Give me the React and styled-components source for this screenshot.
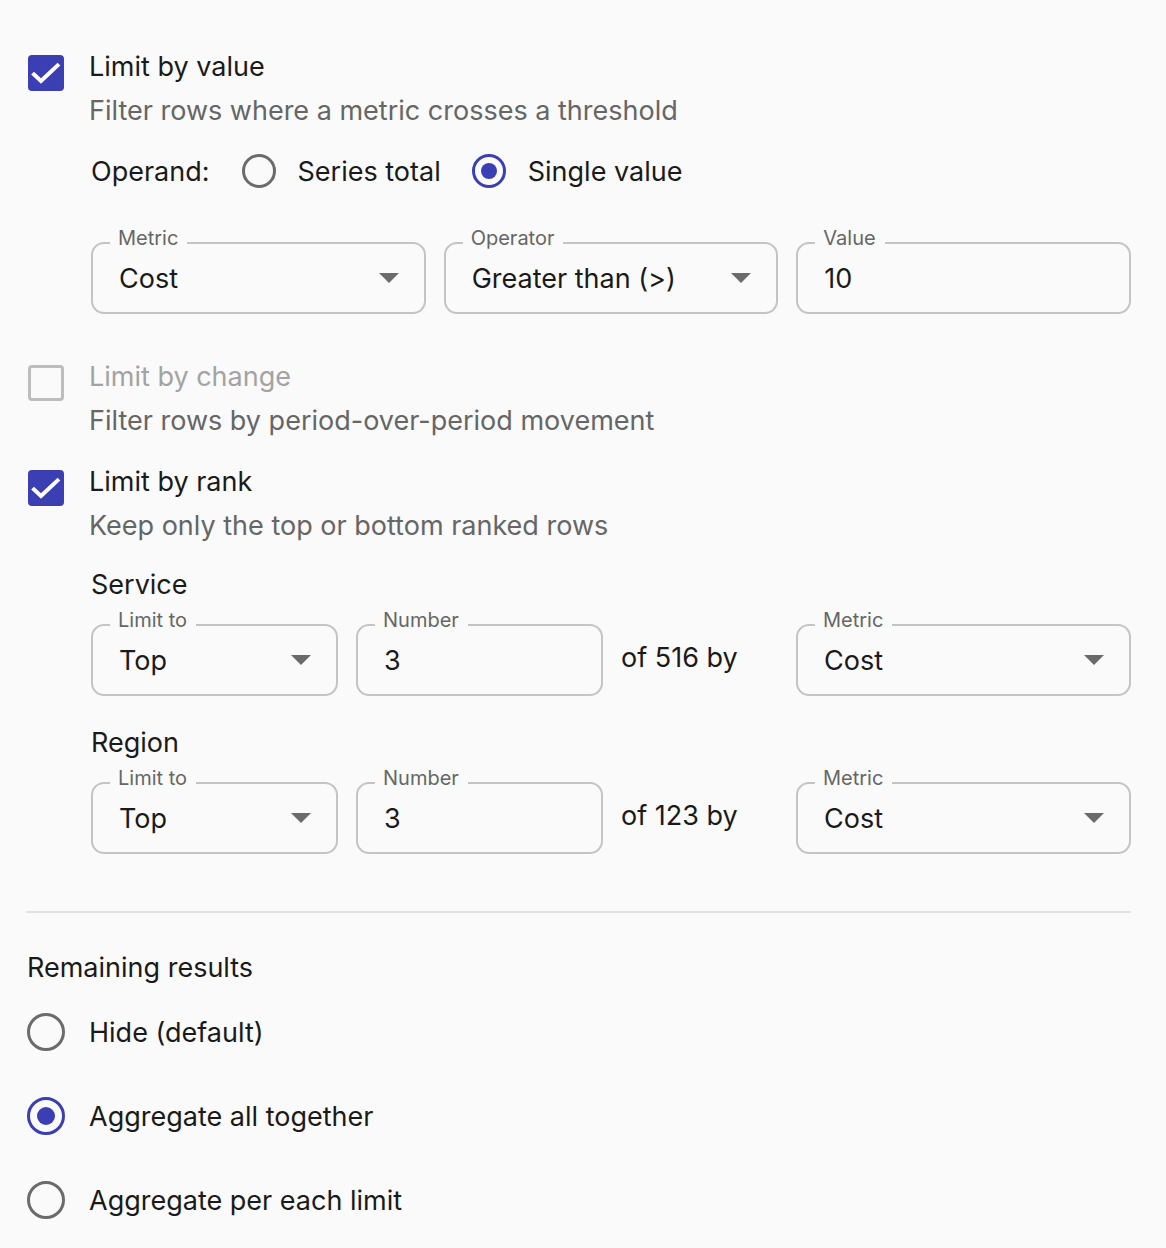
import styled, { createGlobalStyle } from "styled-components";

const GlobalStyle = createGlobalStyle`
  html, body {
    margin: 0;
    background: #fafafa;
  }
  body {
    font-family: Inter, "Noto Sans", Roboto, sans-serif;
    color: #212121;
    -webkit-font-smoothing: antialiased;
  }
`;

const ACCENT = "#3c3eb4";
const TEXT = 27;

const Page = styled.div`
  padding: 45px 35px 40px 26px;
  box-sizing: border-box;
  width: 1166px;
`;

const Option = styled.section`
  display: grid;
  grid-template-columns: 63px 1fr;
  margin-top: ${(p) => p.$gap || 0}px;
`;

const Box = styled.span`
  box-sizing: border-box;
  width: 36px;
  height: 36px;
  margin: 10px 0 0 2px;
  border-radius: 4px;
  display: flex;
  align-items: center;
  justify-content: center;
  background: ${(p) => (p.$checked ? ACCENT : "transparent")};
  border: ${(p) => (p.$checked ? "none" : "3px solid #bdbdbd")};
`;

const Title = styled.div`
  font-size: ${TEXT}px;
  line-height: 44px;
  color: ${(p) => (p.$muted ? "#a3a3a3" : "#1a1a1a")};
`;

const Hint = styled.div`
  font-size: ${TEXT}px;
  line-height: 44px;
  color: #666;
`;

const OperandRow = styled.div`
  display: flex;
  align-items: center;
  height: 44px;
  margin-top: 16px;
  padding-left: 2px;
  font-size: ${TEXT}px;
  color: #1a1a1a;
`;

const OperandLabel = styled.span`
  margin-right: 32px;
`;

const RadioLabel = styled.label`
  display: flex;
  align-items: center;
  gap: ${(p) => (p.$large ? 24 : 22)}px;
  margin-right: ${(p) => (p.$large ? 0 : 31)}px;
  font-size: ${TEXT}px;
  color: #1a1a1a;
`;

const Circle = styled.span`
  box-sizing: border-box;
  width: ${(p) => p.$size}px;
  height: ${(p) => p.$size}px;
  border-radius: 50%;
  border: ${(p) => (p.$large ? 3.5 : 3)}px solid
    ${(p) => (p.$checked ? ACCENT : "#6b6b6b")};
  display: flex;
  align-items: center;
  justify-content: center;
  flex-shrink: 0;

  &::after {
    content: "";
    display: ${(p) => (p.$checked ? "block" : "none")};
    width: ${(p) => Math.round(p.$size * 0.47)}px;
    height: ${(p) => Math.round(p.$size * 0.47)}px;
    border-radius: 50%;
    background: ${ACCENT};
  }
`;

const FieldRow = styled.div`
  display: grid;
  grid-template-columns: ${(p) => p.$cols};
  gap: 18px;
  align-items: center;
  margin-top: ${(p) => p.$gap}px;
  padding-left: 2px;
`;

const Field = styled.div`
  position: relative;
  box-sizing: border-box;
  height: 72px;
  border: 2px solid #c4c4c4;
  border-radius: 13px;
  display: flex;
  align-items: center;
  padding: 0 25px 0 26px;
`;

const FieldLabel = styled.span`
  position: absolute;
  top: -20px;
  left: 17px;
  padding: 0 9px 0 8px;
  background: #fafafa;
  font-size: 20px;
  line-height: 28px;
  color: #666;
`;

const FieldValue = styled.span`
  flex: 1;
  font-size: ${TEXT}px;
  color: #1a1a1a;
`;

const Caret = styled.span`
  width: 0;
  height: 0;
  border-left: 10px solid transparent;
  border-right: 10px solid transparent;
  border-top: 10px solid #6b6b6b;
`;

const OfText = styled.span`
  font-size: ${TEXT}px;
  color: #1a1a1a;
  margin-top: -6px;
`;

const GroupName = styled.div`
  font-size: ${TEXT}px;
  line-height: 44px;
  color: #1a1a1a;
  padding-left: 2px;
  margin-top: ${(p) => p.$gap}px;
`;

const Divider = styled.hr`
  border: none;
  height: 2px;
  background: #e2e2e2;
  margin: 57px 0 0;
`;

const Heading = styled.div`
  font-size: ${TEXT}px;
  line-height: 44px;
  color: #1a1a1a;
  margin-top: 33px;
  padding-left: 1px;
`;

const ResultRow = styled.div`
  height: 84px;
  display: flex;
  align-items: center;
  padding-left: 1px;
`;

const Check = ({ checked }) => (
  <Box $checked={checked}>
    {checked && (
      <svg width="36" height="36" viewBox="0 0 36 36">
        <path
          d="M6 19.5l7 6.5 16.5-15.5"
          fill="none"
          stroke="#fff"
          strokeWidth="4"
          strokeLinecap="square"
        />
      </svg>
    )}
  </Box>
);

const Select = ({ label, value }) => (
  <Field>
    <FieldLabel>{label}</FieldLabel>
    <FieldValue>{value}</FieldValue>
    <Caret />
  </Field>
);

const Input = ({ label, value }) => (
  <Field>
    <FieldLabel>{label}</FieldLabel>
    <FieldValue>{value}</FieldValue>
  </Field>
);

const rankGroups = [
  { name: "Service", total: 516, gap: 15 },
  { name: "Region", total: 123, gap: 25 },
];

const remaining = [
  { label: "Hide (default)", checked: false },
  { label: "Aggregate all together", checked: true },
  { label: "Aggregate per each limit", checked: false },
];

export default function App() {
  return (
    <>
      <GlobalStyle />
      <Page>
        <Option>
          <Check checked />
          <div>
            <Title>Limit by value</Title>
            <Hint>Filter rows where a metric crosses a threshold</Hint>
            <OperandRow>
              <OperandLabel>Operand:</OperandLabel>
              <RadioLabel>
                <Circle $size={34} />
                Series total
              </RadioLabel>
              <RadioLabel>
                <Circle $size={34} $checked />
                Single value
              </RadioLabel>
            </OperandRow>
            <FieldRow $cols="1fr 1fr 1fr" $gap={49}>
              <Select label="Metric" value="Cost" />
              <Select label="Operator" value="Greater than (>)" />
              <Input label="Value" value="10" />
            </FieldRow>
          </div>
        </Option>

        <Option $gap={41}>
          <Check />
          <div>
            <Title $muted>Limit by change</Title>
            <Hint>Filter rows by period-over-period movement</Hint>
          </div>
        </Option>

        <Option $gap={17}>
          <Check checked />
          <div>
            <Title>Limit by rank</Title>
            <Hint>Keep only the top or bottom ranked rows</Hint>
            {rankGroups.map((g) => (
              <div key={g.name}>
                <GroupName $gap={g.gap}>{g.name}</GroupName>
                <FieldRow $cols="247px 247px 1fr 335px" $gap={17}>
                  <Select label="Limit to" value="Top" />
                  <Input label="Number" value="3" />
                  <OfText>of {g.total} by</OfText>
                  <Select label="Metric" value="Cost" />
                </FieldRow>
              </div>
            ))}
          </div>
        </Option>

        <Divider />
        <Heading>Remaining results</Heading>
        {remaining.map((r) => (
          <ResultRow key={r.label}>
            <RadioLabel $large>
              <Circle $size={38} $large $checked={r.checked} />
              {r.label}
            </RadioLabel>
          </ResultRow>
        ))}
      </Page>
    </>
  );
}
